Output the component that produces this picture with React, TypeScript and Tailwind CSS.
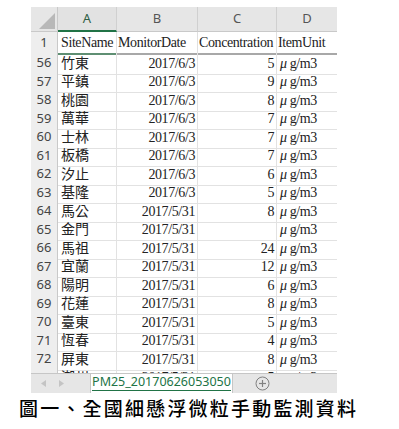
import React from "react";

const rows: [number, string, string, string][] = [
  [56, "竹東", "2017/6/3", "5"],
  [57, "平鎮", "2017/6/3", "9"],
  [58, "桃園", "2017/6/3", "8"],
  [59, "萬華", "2017/6/3", "7"],
  [60, "士林", "2017/6/3", "7"],
  [61, "板橋", "2017/6/3", "7"],
  [62, "汐止", "2017/6/3", "6"],
  [63, "基隆", "2017/6/3", "5"],
  [64, "馬公", "2017/5/31", "8"],
  [65, "金門", "2017/5/31", ""],
  [66, "馬祖", "2017/5/31", "24"],
  [67, "宜蘭", "2017/5/31", "12"],
  [68, "陽明", "2017/5/31", "6"],
  [69, "花蓮", "2017/5/31", "8"],
  [70, "臺東", "2017/5/31", "5"],
  [71, "恆春", "2017/5/31", "4"],
  [72, "屏東", "2017/5/31", "8"],
  [73, "潮州", "2017/5/31", "5"],
];

const serif = "font-['Liberation_Serif','Noto_Sans_CJK_TC',serif]";
const sans = "font-['Noto_Sans','Open_Sans',sans-serif]";

function Unit() {
  return (
    <span>
      <span className="italic">μ</span> g/m3
    </span>
  );
}

export default function App() {
  return (
    <div className="w-[399px] h-[429px] bg-white overflow-hidden">
      <div className="ml-[31px] pt-[7px] w-[306px]">
        {/* column header */}
        <div className={`grid grid-cols-[27px_59px_81px_79px_60px] h-[25px] bg-[#e6e6e6] text-[13px] text-[#555] ${sans}`}>
          <div className="relative border-r border-b border-[#c9c9c9]">
            <svg className="absolute right-[2px] bottom-[2px]" width="16" height="16" viewBox="0 0 16 16">
              <polygon points="16,0 16,16 0,16" fill="#b8b8b8" />
            </svg>
          </div>
          <div className="flex items-center justify-center border-r border-[#d0d0d0] border-b-2 border-b-[#217346] text-[#2f5f45] bg-[#e2e2e2]">A</div>
          <div className="flex items-center justify-center border-r border-b border-[#d0d0d0] border-b-[#c9c9c9]">B</div>
          <div className="flex items-center justify-center border-r border-b border-[#d0d0d0] border-b-[#c9c9c9]">C</div>
          <div className="flex items-center justify-center border-b border-[#c9c9c9]">D</div>
        </div>
        {/* row 1 */}
        <div className={`grid grid-cols-[27px_59px_81px_79px_60px] h-[20.5px] text-[14px] tracking-[-0.4px] text-[#222] ${serif}`}>
          <div className={`flex items-center justify-center bg-[#eeeeee] border-r border-[#c9c9c9] border-b-2 border-b-[#a8a8a8] text-[13px] tracking-normal text-[#444] ${sans}`}>1</div>
          <div className="flex items-center pl-[3px] border-r border-[#e0e0e0] border-b-2 border-b-[#5f8f73] whitespace-nowrap">SiteName</div>
          <div className="flex items-center pl-[1px] border-r border-[#e0e0e0] border-b-2 border-b-[#a8a8a8] whitespace-nowrap">MonitorDate</div>
          <div className="flex items-center pl-[1px] border-r border-[#e0e0e0] border-b-2 border-b-[#a8a8a8] whitespace-nowrap">Concentration</div>
          <div className="flex items-center pl-[1px] border-b-2 border-b-[#a8a8a8] whitespace-nowrap">ItemUnit</div>
        </div>
        {/* data rows */}
        <div className="h-[320.5px] overflow-hidden">
          {rows.map(([n, site, date, val]) => (
            <div key={n} className={`grid grid-cols-[27px_59px_81px_79px_60px] h-[18.5px] text-[14px] tracking-[-0.4px] text-[#222] ${serif}`}>
              <div className={`flex items-center justify-center bg-[#eeeeee] border-r border-[#c9c9c9] border-b border-b-[#dadada] text-[13px] tracking-normal text-[#444] ${sans}`}>{n}</div>
              <div className="flex items-center pl-[3px] tracking-normal border-r border-b border-[#e2e2e2] whitespace-nowrap">{site}</div>
              <div className="flex items-center justify-end pr-[2px] border-r border-b border-[#e2e2e2] whitespace-nowrap">{date}</div>
              <div className="flex items-center justify-end pr-[2px] border-r border-b border-[#e2e2e2] whitespace-nowrap">{val}</div>
              <div className="flex items-center pl-[3px] border-b border-[#e2e2e2] whitespace-nowrap"><Unit /></div>
            </div>
          ))}
        </div>
        {/* tab bar */}
        <div className={`relative z-10 flex h-[20px] bg-[#e6e6e6] border-t border-[#c6c6c6] ${sans}`}>
          <div className="flex items-center gap-[13px] pl-[10px] w-[59px]">
            <svg width="5" height="7" viewBox="0 0 5 7"><polygon points="5,0 5,7 0,3.5" fill="#c4c4c4" /></svg>
            <svg width="5" height="7" viewBox="0 0 5 7"><polygon points="0,0 0,7 5,3.5" fill="#c4c4c4" /></svg>
          </div>
          <div className="w-[143px] bg-white border-x border-[#c6c6c6] flex items-start justify-center">
            <span className="text-[12.5px] leading-[16px] text-[#217346] border-b-[1.5px] border-[#217346] whitespace-nowrap">PM25_20170626053050</span>
          </div>
          <div className="flex items-center pl-[22px]">
            <svg width="15" height="15" viewBox="0 0 15 15">
              <circle cx="7.5" cy="7.5" r="6.5" fill="none" stroke="#808080" strokeWidth="1" />
              <line x1="4" y1="7.5" x2="11" y2="7.5" stroke="#808080" strokeWidth="1.2" />
              <line x1="7.5" y1="4" x2="7.5" y2="11" stroke="#808080" strokeWidth="1.2" />
            </svg>
          </div>
        </div>
      </div>
      <div className="pl-[19px] pt-[4px] text-[19px] leading-[22px] tracking-[2.2px] text-black font-medium font-['Noto_Sans_CJK_TC',sans-serif] whitespace-nowrap">
        圖一、全國細懸浮微粒手動監測資料
      </div>
    </div>
  );
}
